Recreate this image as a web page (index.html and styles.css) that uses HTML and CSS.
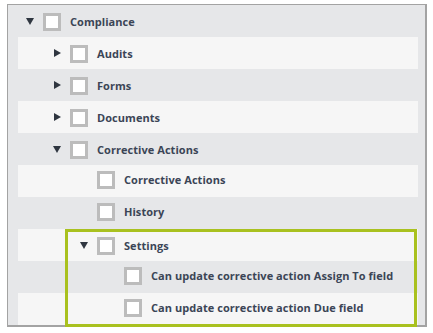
FILE: index.html
```html
<!DOCTYPE html>
<html lang="en">
<head>
    <meta charset="UTF-8">
    <meta name="viewport" content="width=device-width, initial-scale=1.0">
    <title>Permissions tree</title>
    <link rel="stylesheet" href="styles.css">
</head>
<body>
    <div class="tree">
        <div class="tree-row lvl-0">
            <span class="toggle open"></span>
            <span class="check"></span>
            <span class="label">Compliance</span>
        </div>
        <div class="tree-row lvl-1 alt">
            <span class="toggle closed"></span>
            <span class="check"></span>
            <span class="label">Audits</span>
        </div>
        <div class="tree-row lvl-1">
            <span class="toggle closed"></span>
            <span class="check"></span>
            <span class="label">Forms</span>
        </div>
        <div class="tree-row lvl-1 alt">
            <span class="toggle closed"></span>
            <span class="check"></span>
            <span class="label">Documents</span>
        </div>
        <div class="tree-row lvl-1">
            <span class="toggle open"></span>
            <span class="check"></span>
            <span class="label">Corrective Actions</span>
        </div>
        <div class="tree-row lvl-2 alt leaf">
            <span class="toggle"></span>
            <span class="check"></span>
            <span class="label">Corrective Actions</span>
        </div>
        <div class="tree-row lvl-2 leaf">
            <span class="toggle"></span>
            <span class="check"></span>
            <span class="label">History</span>
        </div>
        <div class="tree-group selected">
            <div class="tree-row lvl-2 alt">
                <span class="toggle open"></span>
                <span class="check"></span>
                <span class="label">Settings</span>
            </div>
            <div class="tree-row lvl-3 leaf">
                <span class="toggle"></span>
                <span class="check"></span>
                <span class="label">Can update corrective action Assign To field</span>
            </div>
            <div class="tree-row lvl-3 alt leaf">
                <span class="toggle"></span>
                <span class="check"></span>
                <span class="label">Can update corrective action Due field</span>
            </div>
        </div>
    </div>
</body>
</html>
```

FILE: styles.css
```css
body {
    margin: 0;
    font-family: 'Open Sans', 'Liberation Sans', sans-serif;
    background-color: white;
}
.tree {
    margin: 4px 0 0 7px;
    width: 417px;
    background-color: #e6e7e9;
    border-style: solid;
    border-color: #a3a3a3;
    border-width: 1px 2px 2px 1px;
}
.tree-row {
    display: flex;
    align-items: center;
    height: 32px;
    box-sizing: border-box;
    margin: 0 7px 0 10px;
    padding-left: 8px;
}
.tree-row.alt {
    background-color: #f6f6f6;
}
.tree-row.leaf {
    padding-bottom: 4px;
}
.lvl-1 { padding-left: 35px; }
.lvl-2 { padding-left: 62px; }
.lvl-3 { padding-left: 89px; }
.lvl-0 {
    margin: 0;
    padding-left: 18px;
}
.toggle {
    width: 17px;
    height: 9px;
    flex-shrink: 0;
    position: relative;
}
.toggle.open::before,
.toggle.closed::before {
    content: '';
    position: absolute;
    width: 0;
    height: 0;
}
.toggle.open::before {
    top: 1px;
    left: 0;
    border-top: 7px solid #2f3640;
    border-left: 4.5px solid transparent;
    border-right: 4.5px solid transparent;
}
.toggle.closed::before {
    top: 0;
    left: 1px;
    border-left: 7px solid #2f3640;
    border-top: 4.5px solid transparent;
    border-bottom: 4.5px solid transparent;
}
.check {
    width: 18px;
    height: 18px;
    box-sizing: border-box;
    border: 3px solid #bcbcbc;
    background-color: white;
    margin-right: 9px;
    margin-top: 2px;
    flex-shrink: 0;
}
.label {
    font-size: 11px;
    font-weight: 700;
    color: #3b4556;
    white-space: nowrap;
    letter-spacing: 0.05px;
}
.tree-group {
    position: relative;
}
.tree-group.selected::after {
    content: '';
    position: absolute;
    top: 0;
    left: 57px;
    right: 8px;
    bottom: -2px;
    border: 3px solid #a9c11f;
    pointer-events: none;
}
```
